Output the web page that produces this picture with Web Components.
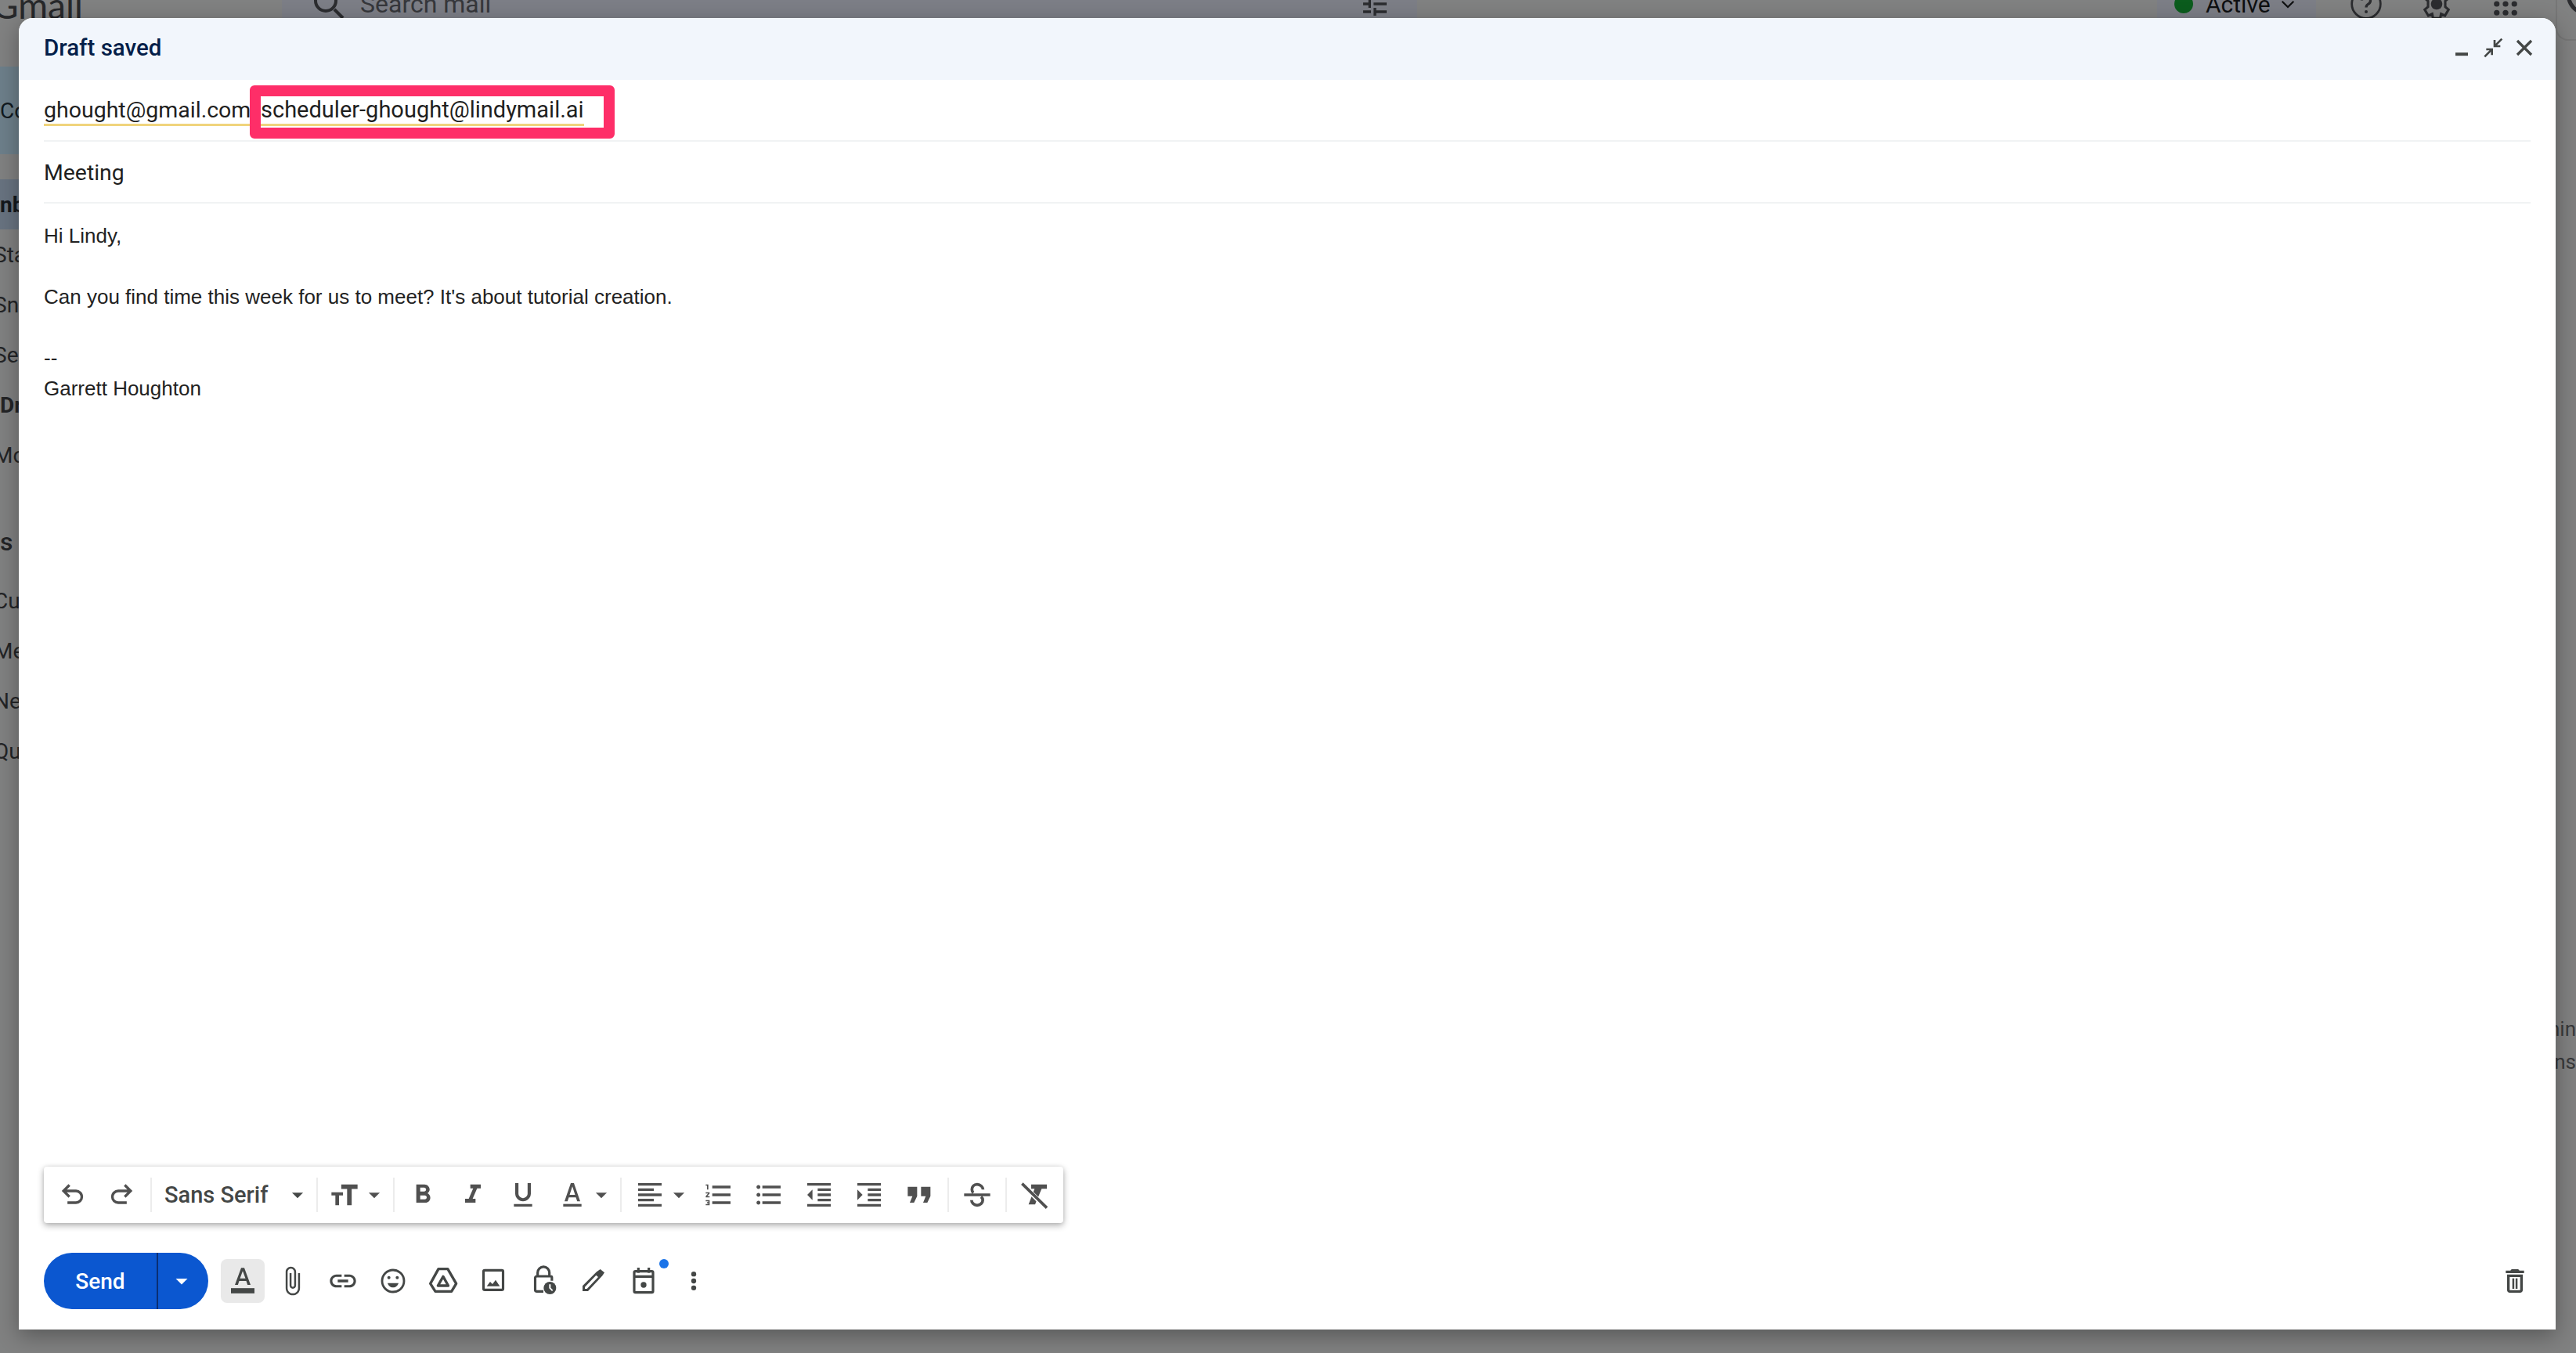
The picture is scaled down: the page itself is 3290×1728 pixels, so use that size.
<!DOCTYPE html>
<html lang="en">
<head>
<meta charset="utf-8">
<title>Gmail compose</title>
<style>
html,body{margin:0;padding:0;height:100%;}
body{position:relative;width:3290px;height:1728px;overflow:hidden;background:#808181;font-family:"Roboto","Liberation Sans",sans-serif;}
</style>
</head>
<body>
<gmail-backdrop></gmail-backdrop>
<compose-window>
  <compose-header slot="header">Draft saved</compose-header>
  <recipient-row slot="to">
    <mail-chip style="--chip-size:28.5px">ghought@gmail.com</mail-chip>
    <mail-chip slot="marked" style="--chip-size:29px">scheduler-ghought@lindymail.ai</mail-chip>
  </recipient-row>
  <subject-row slot="subject">Meeting</subject-row>
  <message-body slot="body">
    <div>Hi Lindy,</div>
    <div><br></div>
    <div>Can you find time this week for us to meet? It's about tutorial creation.</div>
    <div><br></div>
    <div>--</div>
    <div>Garrett Houghton</div>
  </message-body>
  <format-bar slot="format"></format-bar>
  <send-bar slot="send"></send-bar>
</compose-window>

<script>
const ICONS = {
  undo: '<path fill="none" stroke="currentColor" stroke-width="2" d="M10 4.5L5.500 9l4.500 4.500M5.500 9H15a4.500 4.500 0 0 1 0 9H8.500"/>',
  redo: '<path fill="none" stroke="currentColor" stroke-width="2" d="M14 4.500L18.500 9 14 13.500M18.500 9H9a4.500 4.500 0 0 0 0 9h6.500"/>',
  size: '<path d="M9.500 4v3.500H14V20h3.500V7.500H22V4z"/><path d="M2 10v2.500h3V20h2.800v-7.500h3V10z"/>',
  bold: '<path d="M15.600 10.790c.97-.67 1.650-1.770 1.650-2.790 0-2.260-1.750-4-4-4H7v14h7.040c2.090 0 3.710-1.700 3.710-3.790 0-1.520-.86-2.820-2.150-3.420zM10 6.500h3c.83 0 1.500.67 1.500 1.500s-.67 1.500-1.500 1.500h-3v-3zm3.500 9H10v-3h3.500c.83 0 1.500.67 1.500 1.500s-.67 1.500-1.500 1.500z"/>',
  italic: '<path d="M10 4v3h2.210l-3.420 8H6v3h8v-3h-2.210l3.420-8H18V4z"/>',
  underline: '<path d="M12 17c3.310 0 6-2.690 6-6V3h-2.500v8c0 1.930-1.570 3.500-3.500 3.500S8.500 12.930 8.500 11V3H6v8c0 3.310 2.690 6 6 6zm-7 2v2h14v-2H5z"/>',
  color: '<path d="M10.800 3L6 17h2.300l1-3.100h5.400l1 3.100H18L13.200 3zm-.9 9L12 5.600 14.100 12z"/><rect x="5" y="19" width="14" height="2"/>',
  align: '<path d="M15 15H3v2h12v-2zm0-8H3v2h12V7zM3 13h18v-2H3v2zm0 8h18v-2H3v2zM3 3v2h18V3H3z"/>',
  numbered: '<path d="M2 17h2v.5H3v1h1v.5H2v1h3v-4H2v1zm1-9h1V4H2v1h1v3zm-1 3h1.800L2 13.100v.9h3v-1H3.200L5 10.900V10H2v1zm5-6v2h14V5H7zm0 14h14v-2H7v2zm0-6h14v-2H7v2z"/>',
  bulleted: '<path d="M4 10.500c-.83 0-1.500.67-1.500 1.500s.67 1.500 1.500 1.500 1.500-.67 1.500-1.500-.67-1.500-1.500-1.500zm0-6c-.83 0-1.500.67-1.500 1.500S3.170 7.500 4 7.500 5.500 6.830 5.500 6 4.830 4.500 4 4.500zm0 12c-.83 0-1.500.68-1.500 1.500s.68 1.500 1.500 1.500 1.500-.68 1.500-1.500-.67-1.500-1.500-1.500zM7 19h14v-2H7v2zm0-6h14v-2H7v2zm0-8v2h14V5H7z"/>',
  indentless: '<path d="M11 17h10v-2H11v2zm-8-5l4 4V8l-4 4zm0 9h18v-2H3v2zM3 3v2h18V3H3zm8 6h10V7H11v2zm0 4h10v-2H11v2z"/>',
  indentmore: '<path d="M3 21h18v-2H3v2zM3 8v8l4-4-4-4zm8 9h10v-2H11v2zM3 3v2h18V3H3zm8 6h10V7H11v2zm0 4h10v-2H11v2z"/>',
  quote: '<path d="M3.200 5.800h7.200V13L8 18H4.800l2-5H3.200zM13.400 5.800h7.200V13l-2.400 5H15l2-5h-3.600z"/>',
  strike: '<path fill="none" stroke="currentColor" stroke-width="2.200" d="M16.500 8c0-2-2-4-4.500-4S8 5.800 8 8c0 1 .4 1.800 1 2.500M2 12h20M15 13.500c.8.700 1.300 1.500 1.300 2.500 0 2.200-2 4-4.300 4s-4.300-1.800-4.300-4"/>',
  clear: '<path d="M9.600 4h12v3.400h-4L12.600 19.400h-5l4.600-12h-2.600z"/><path fill="none" stroke="#fff" stroke-width="3.600" d="M6 7l15 15"/><path fill="none" stroke="currentColor" stroke-width="2.200" d="M2.600 3.400L21.600 22"/>',
  textcolor: '<path d="M10.800 2L6 15h2.300l1-3h5.400l1 3H18L13.200 2zm-.9 8L12 4.300 14.100 10z"/><rect x="3" y="17.500" width="18" height="4"/>',
  attach: '<path d="M16.500 6v11.500c0 2.210-1.790 4-4 4s-4-1.790-4-4V5c0-1.380 1.120-2.500 2.500-2.500s2.500 1.120 2.500 2.500v10.500c0 .55-.45 1-1 1s-1-.45-1-1V6H10v9.500c0 1.380 1.120 2.500 2.500 2.500s2.500-1.120 2.500-2.500V5c0-2.210-1.790-4-4-4S7 2.790 7 5v12.500c0 3.040 2.460 5.500 5.500 5.500s5.500-2.460 5.500-5.500V6h-1.500z" transform="translate(-.5 0)"/>',
  link: '<path d="M3.900 12c0-1.710 1.390-3.100 3.100-3.100h4V7H7c-2.760 0-5 2.240-5 5s2.240 5 5 5h4v-1.900H7c-1.710 0-3.100-1.390-3.100-3.100zM8 13h8v-2H8v2zm9-6h-4v1.900h4c1.710 0 3.100 1.390 3.100 3.100s-1.390 3.100-3.100 3.100h-4V17h4c2.760 0 5-2.240 5-5s-2.240-5-5-5z"/>',
  emoji: '<circle cx="12" cy="12" r="8.400" fill="none" stroke="currentColor" stroke-width="1.700"/><circle cx="8.800" cy="9.400" r="1.200"/><circle cx="15.200" cy="9.400" r="1.200"/><path d="M7.800 13.600h8.400c-.6 2-2.200 3.400-4.200 3.400s-3.600-1.400-4.200-3.400z"/>',
  drive: '<path fill="none" stroke="currentColor" stroke-width="2" stroke-linejoin="round" d="M8.400 2.800h7.100l6.500 11.200-3.600 6H6l-3.800-6z"/><path fill="none" stroke="currentColor" stroke-width="2" stroke-linejoin="round" d="M12 8.600l3.900 7H8z"/>',
  photo: '<rect x="4.500" y="3.800" width="15" height="15" rx="1" fill="none" stroke="currentColor" stroke-width="1.900"/><path d="M7 16l2.600-3.400 1.800 1.800 2.400-3.200 3.200 4.800z"/>',
  lock: '<path fill="none" stroke="currentColor" stroke-width="1.900" d="M7.600 8V5.600a4.500 4.500 0 0 1 9 0V8M12 20H7a1.300 1.300 0 0 1-1.300-1.300v-9A1.300 1.300 0 0 1 7 8.400h10.500a1 1 0 0 1 1 1v2.500"/><circle cx="17" cy="17.400" r="4.800"/><path d="M16.400 14.500h1.200v2.700l1.800 1.800-.8.8-2.200-2.200z" fill="#fff"/>',
  pen: '<path fill-rule="evenodd" d="M3.600 19.800v-4L14.400 5l2.800-2 3.200 2.600-1.600 2.400-11 11.800zM5.400 16.600V18H7l8.600-9-1.600-1.400z"/>',
  calendar: '<path fill="none" stroke="currentColor" stroke-width="1.900" d="M8 1.800v4M16 1.800v4M5.800 4.600h12.400a1 1 0 0 1 1 1v14.200a1 1 0 0 1-1 1H5.800a1 1 0 0 1-1-1V5.600a1 1 0 0 1 1-1zM4.800 8.600h14.400"/><circle cx="12" cy="15" r="2.200"/>',
  more: '<circle cx="12" cy="6.700" r="1.900"/><circle cx="12" cy="12" r="1.900"/><circle cx="12" cy="17.300" r="1.900"/>',
  trash: '<path d="M6 19c0 1.100.9 2 2 2h8c1.100 0 2-.9 2-2V7H6v12zM8 9h8v10H8V9zm7.500-5l-1-1h-5l-1 1H5v2h14V4h-3.500z"/><rect x="10" y="10" width="1.500" height="8"/><rect x="12.500" y="10" width="1.500" height="8"/>',
  minimize: '<rect x="7.200" y="15.700" width="9.600" height="2.400"/>',
  shrink: '<path fill="none" stroke="currentColor" stroke-width="2" d="M4 20.500l6.500-6.500M5.500 13.500H11V19M20.500 3.500L14 10M13.500 4.500V10.500H19"/>',
  close: '<path fill="none" stroke="currentColor" stroke-width="2.200" d="M6 6l12 12M18 6L6 18"/>',
  caret: '<path d="M7 10l5 5 5-5z"/>',
  chevron: '<path fill="none" stroke="currentColor" stroke-width="1.600" d="M6.500 9.500L12 15l5.500-5.500"/>',
  search: '<path fill="none" stroke="currentColor" stroke-width="2" d="M15.500 15.500L21 21"/><circle cx="10" cy="10" r="6.500" fill="none" stroke="currentColor" stroke-width="2"/>',
  tune: '<path d="M3 17v2h6v-2H3zM3 5v2h10V5H3zm10 16v-2h8v-2h-8v-2h-2v6h2zM7 9v2H3v2h4v2h2V9H7zm14 4v-2H11v2h10zm-6-4h2V7h4V5h-4V3h-2v6z"/>',
  help: '<circle cx="12" cy="12" r="10" fill="none" stroke="currentColor" stroke-width="1.500"/><path fill="none" stroke="currentColor" stroke-width="1.800" d="M9 9.500a3 3 0 1 1 4.500 2.600c-1 .6-1.500 1.200-1.500 2.400"/><circle cx="12" cy="17.500" r="1.100"/>',
  gear: '<path fill="none" stroke="currentColor" stroke-width="1.700" d="M9.500 2h5l.6 3 2.700-1.200 2.500 4.200-2.300 2 0 4 2.300 2-2.500 4.200-2.700-1.200-.6 3h-5l-.6-3-2.700 1.200-2.500-4.200 2.300-2v-4l-2.300-2 2.500-4.200 2.700 1.200z"/><circle cx="12" cy="12" r="4"/>',
  apps: '<g><circle cx="4.500" cy="4.500" r="2.400"/><circle cx="12" cy="4.500" r="2.400"/><circle cx="19.500" cy="4.500" r="2.400"/><circle cx="4.500" cy="12" r="2.400"/><circle cx="12" cy="12" r="2.400"/><circle cx="19.500" cy="12" r="2.400"/><circle cx="4.500" cy="19.500" r="2.400"/><circle cx="12" cy="19.500" r="2.400"/><circle cx="19.500" cy="19.500" r="2.400"/></g>'
};

class GIcon extends HTMLElement{
    constructor(){
        super();
        this.attachShadow({mode: "open"});
    }
    connectedCallback(){
        const size = this.getAttribute("size") || 40;
        const name = this.getAttribute("name");
        this.shadowRoot.innerHTML = `
        <style>
        :host{display:inline-flex;width:${size}px;height:${size}px;flex:none;color:inherit;}
        svg{display:block;width:100%;height:100%;fill:currentColor;}
        </style>
        <svg viewBox="0 0 24 24">${ICONS[name]}</svg>`;
    }
}
customElements.define("g-icon", GIcon);

class GmailBackdrop extends HTMLElement{
    constructor(){
        super();
        this.attachShadow({mode: "open"});
        this.shadowRoot.innerHTML = `
        <style>
        :host{display:block;width:3290px;height:1728px;overflow:hidden;background:#808181;color:#28292b;font-family:"Roboto","Liberation Sans",sans-serif;}
        .top{display:flex;align-items:center;height:60px;margin-top:-25px;color:#2b2c2f;}
        .logo{font:400 46px "Lato","Roboto",sans-serif;width:370px;margin-left:-10px;flex:none;color:#27282a;transform:translateY(1px);}
        .search{display:flex;align-items:center;width:1450px;height:60px;background:#7c7e86;flex:none;}
        .search g-icon{margin-left:36px;}
        .search span{font-size:32px;margin-left:16px;color:#36373b;flex:1;}
        .search g-icon.tune{margin:0 34px 0 0;}
        .active{display:flex;align-items:center;width:203px;height:60px;background:#7c7e86;margin-left:auto;padding-left:22px;box-sizing:border-box;font-size:30px;color:#0e0f10;flex:none;margin-right:42px;}
        .dot{width:24px;height:24px;border-radius:50%;background:#0b5c1d;margin-right:16px;flex:none;}
        .active g-icon{margin-left:6px;}
        .help{margin-right:46px;}
        .gear{margin-right:48px;}
        .acct{flex:none;align-self:flex-start;width:26px;height:77px;margin-left:46px;box-sizing:border-box;border:solid #767676;border-width:0 0 2px 2px;border-bottom-left-radius:16px;overflow:hidden;}
        .acct i{display:block;width:40px;height:40px;border:5px solid #2b2c2f;border-radius:50%;margin:-6px 0 0 12px;}
        .main{display:flex;justify-content:space-between;height:1693px;}
        nav{display:flex;flex-direction:column;width:60px;overflow:hidden;font-size:28px;white-space:nowrap;margin-top:50px;}
        .compose{height:112px;background:#6d7f8a;display:flex;align-items:center;color:#111a20;flex:none;}
        .row{height:64px;display:flex;align-items:center;flex:none;color:#232426;text-indent:-8px;}
        .inbox{background:#687380;font-weight:700;color:#14181d;margin-top:32px;text-indent:0;}
        .drafts{font-weight:700;text-indent:0;}
        .labels{margin-top:36px;height:86px;font-size:32px;font-weight:500;text-indent:0;}
        .aside{display:flex;flex-direction:column;align-items:flex-end;font-size:26px;color:#38393b;margin-top:1258px;line-height:42px;}
        </style>
        <div class="top">
            <div class="logo">Gmail</div>
            <div class="search">
                <g-icon name="search" size="48"></g-icon>
                <span>Search mail</span>
                <g-icon class="tune" name="tune" size="40"></g-icon>
            </div>
            <div class="active"><i class="dot"></i>Active<g-icon name="chevron" size="32"></g-icon></div>
            <g-icon class="help" name="help" size="44"></g-icon>
            <g-icon class="gear" name="gear" size="44"></g-icon>
            <g-icon name="apps" size="36"></g-icon>
            <div class="acct"><i></i></div>
        </div>
        <div class="main">
            <nav>
                <div class="compose">Co</div>
                <div class="row inbox">nb</div>
                <div class="row">Sta</div>
                <div class="row">Sne</div>
                <div class="row">Sen</div>
                <div class="row drafts">Dra</div>
                <div class="row">Mo</div>
                <div class="row labels">s</div>
                <div class="row">Cu</div>
                <div class="row">Me</div>
                <div class="row">Ne</div>
                <div class="row">Qu</div>
            </nav>
            <div class="aside"><span>nin</span><span>ons</span></div>
        </div>`;
    }
}
customElements.define("gmail-backdrop", GmailBackdrop);

class ComposeWindow extends HTMLElement{
    constructor(){
        super();
        this.attachShadow({mode: "open"});
        this.shadowRoot.innerHTML = `
        <style>
        :host{position:absolute;left:24px;top:23px;width:3240px;height:1675px;display:flex;flex-direction:column;background:#fff;border-radius:18px 18px 0 0;box-shadow:0 8px 28px rgba(0,0,0,.32);font-family:"Roboto","Liberation Sans",sans-serif;}
        .grow{flex:1;min-height:0;}
        </style>
        <slot name="header"></slot>
        <slot name="to"></slot>
        <slot name="subject"></slot>
        <div class="grow"><slot name="body"></slot></div>
        <slot name="format"></slot>
        <slot name="send"></slot>`;
    }
}
customElements.define("compose-window", ComposeWindow);

class ComposeHeader extends HTMLElement{
    constructor(){
        super();
        this.attachShadow({mode: "open"});
        this.shadowRoot.innerHTML = `
        <style>
        :host{display:flex;align-items:center;box-sizing:border-box;height:79px;padding:0 20px 3px 32px;background:#f2f6fc;border-radius:18px 18px 0 0;color:#041e49;font-size:29.5px;font-weight:500;}
        .title{flex:1;}
        .btn{display:flex;justify-content:center;width:40px;color:#444746;}
        </style>
        <div class="title"><slot></slot></div>
        <span class="btn"><g-icon name="minimize" size="40"></g-icon></span>
        <span class="btn"><g-icon name="shrink" size="32"></g-icon></span>
        <span class="btn"><g-icon name="close" size="36"></g-icon></span>`;
    }
}
customElements.define("compose-header", ComposeHeader);

class MailChip extends HTMLElement{
    constructor(){
        super();
        this.attachShadow({mode: "open"});
        this.shadowRoot.innerHTML = `
        <style>
        :host{display:inline-block;font-size:var(--chip-size,28.5px);line-height:35px;color:#1f1f1f;border-bottom:3px solid #f0d47c;white-space:nowrap;}
        </style>
        <slot></slot>`;
    }
}
customElements.define("mail-chip", MailChip);

class RecipientRow extends HTMLElement{
    constructor(){
        super();
        this.attachShadow({mode: "open"});
        this.shadowRoot.innerHTML = `
        <style>
        :host{display:flex;align-items:flex-start;height:79px;margin:0 32px;padding-top:21px;box-sizing:border-box;border-bottom:2px solid #f1f3f4;}
        .first{display:flex;width:263px;flex:none;}
        .mark{display:flex;align-items:flex-start;box-sizing:border-box;height:68px;width:466px;border:14px solid #fe2e68;border-radius:6px;margin-top:-14px;}
        </style>
        <div class="first"><slot></slot></div>
        <div class="mark"><slot name="marked"></slot></div>`;
    }
}
customElements.define("recipient-row", RecipientRow);

class SubjectRow extends HTMLElement{
    constructor(){
        super();
        this.attachShadow({mode: "open"});
        this.shadowRoot.innerHTML = `
        <style>
        :host{display:flex;align-items:center;height:79px;margin:0 32px;padding-top:2px;box-sizing:border-box;border-bottom:2px solid #f1f3f4;font-size:28.4px;color:#1f1f1f;}
        </style>
        <slot></slot>`;
    }
}
customElements.define("subject-row", SubjectRow);

class MessageBody extends HTMLElement{
    constructor(){
        super();
        this.attachShadow({mode: "open"});
        this.shadowRoot.innerHTML = `
        <style>
        :host{display:block;padding:22px 32px 0;font:26px/39px "Liberation Sans",Arial,sans-serif;color:#222;}
        </style>
        <slot></slot>`;
    }
}
customElements.define("message-body", MessageBody);

class FormatBar extends HTMLElement{
    constructor(){
        super();
        this.attachShadow({mode: "open"});
        const b = (name, cls = "") => `<span class="b ${cls}"><g-icon name="${name}" size="40"></g-icon></span>`;
        const caret = `<g-icon name="caret" size="34"></g-icon>`;
        this.shadowRoot.innerHTML = `
        <style>
        :host{display:flex;align-items:center;box-sizing:border-box;width:1302px;height:72px;margin:0 0 38px 32px;padding-left:4px;background:#fff;border-radius:4px;box-shadow:0 3px 8px rgba(0,0,0,.32),0 0 4px rgba(0,0,0,.08);color:#505050;}
        .b{display:flex;align-items:center;justify-content:center;width:64px;flex:none;}
        .s{width:2px;height:44px;background:#ececec;flex:none;}
        .font{display:flex;align-items:center;width:210px;padding-left:16px;box-sizing:border-box;font-size:29px;flex:none;color:#444746;font-weight:500;}
        .font span{flex:1;}
        .font g-icon{margin-right:7px;}
        .group{display:flex;align-items:center;flex:none;}
        .sz{width:96px;justify-content:flex-start;padding-left:14px;box-sizing:border-box;}
        .sz g-icon + g-icon{margin-left:1px;}
        .col{width:92px;box-sizing:border-box;}
        .col g-icon:first-child{margin-left:11px;}
        .col g-icon + g-icon{margin-left:0;}
        </style>
        ${b("undo")}${b("redo")}
        <i class="s" style="margin-left:4px"></i>
        <div class="font"><span>Sans Serif</span>${caret}</div>
        <i class="s"></i>
        <div class="group sz"><g-icon name="size" size="40"></g-icon>${caret}</div>
        <i class="s" style="margin-right:4px"></i>
        ${b("bold")}${b("italic")}${b("underline")}
        <div class="group col"><g-icon name="color" size="40"></g-icon>${caret}</div>
        <i class="s"></i>
        <div class="group col"><g-icon name="align" size="40" style="margin-left:16px"></g-icon>${caret}</div>
        ${b("numbered")}${b("bulleted")}${b("indentless")}${b("indentmore")}${b("quote")}
        <i class="s" style="margin-left:4px"></i>
        <span class="b" style="width:72px"><g-icon name="strike" size="40"></g-icon></span>
        <i class="s"></i>
        <span class="b" style="width:70px"><g-icon name="clear" size="40"></g-icon></span>`;
    }
}
customElements.define("format-bar", FormatBar);

class SendButton extends HTMLElement{
    constructor(){
        super();
        this.attachShadow({mode: "open"});
        this.shadowRoot.innerHTML = `
        <style>
        :host{display:flex;width:210px;height:72px;border-radius:36px;background:#0b57d0;color:#fff;font-size:28px;font-weight:500;flex:none;overflow:hidden;}
        .send{display:flex;align-items:center;justify-content:center;width:146px;border-right:2px solid #0a2f73;box-sizing:border-box;}
        .drop{flex:1;display:flex;align-items:center;justify-content:center;margin-left:-4px;}
        </style>
        <div class="send">Send</div>
        <div class="drop"><g-icon name="caret" size="36"></g-icon></div>`;
    }
}
customElements.define("send-button", SendButton);

class SendBar extends HTMLElement{
    constructor(){
        super();
        this.attachShadow({mode: "open"});
        const names = ["attach","link","emoji","drive","photo","lock","pen","calendar","more"];
        const tools = names.map(n => `<span class="b ${n}"><g-icon name="${n}" size="40"></g-icon>${n === "calendar" ? '<i class="badge"></i>' : ""}</span>`).join("");
        this.shadowRoot.innerHTML = `
        <style>
        :host{display:flex;align-items:center;height:72px;margin:0 0 26px 32px;color:#444746;padding-right:20px;}
        .b{position:relative;display:flex;align-items:center;justify-content:center;width:64px;height:56px;flex:none;}
        .on{width:56px;background:#e9e9e9;border-radius:8px;margin:0 4px 0 16px;}
        .badge{position:absolute;right:0;top:0;width:12px;height:12px;border-radius:50%;background:#1a73e8;}
        .trash{margin-left:auto;}
        </style>
        <send-button></send-button>
        <span class="b on"><g-icon name="textcolor" size="40"></g-icon></span>
        ${tools}
        <span class="b trash"><g-icon name="trash" size="40"></g-icon></span>`;
    }
}
customElements.define("send-bar", SendBar);
</script>
</body>
</html>
